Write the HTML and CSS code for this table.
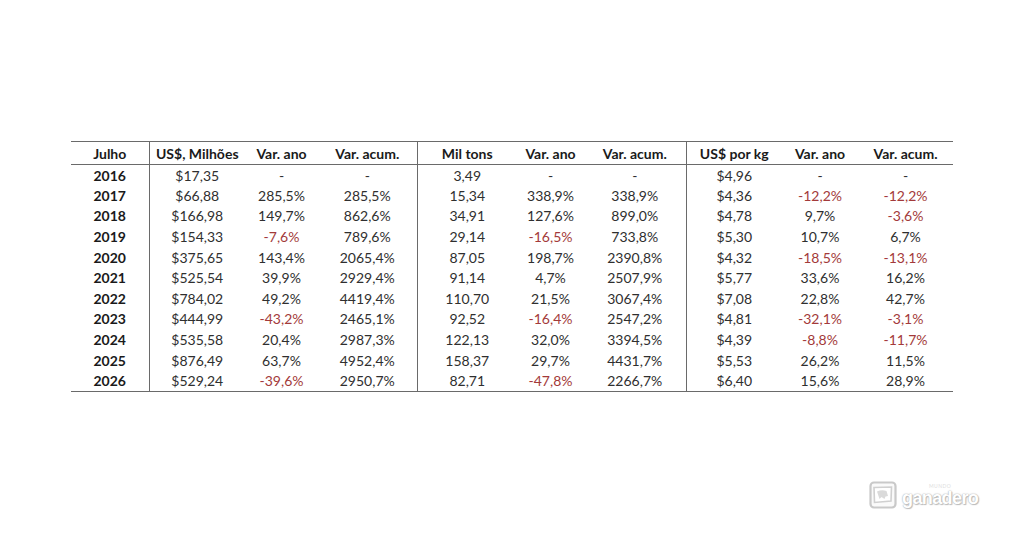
FILE: index.html
```html
<!DOCTYPE html>
<html lang="pt">
<head>
<meta charset="utf-8">
<title>Julho</title>
<link rel="stylesheet" href="styles.css">
</head>
<body>
<div class="page">
  <table class="data">
    <colgroup>
      <col class="c1"><col class="c2"><col class="c3"><col class="c4">
      <col class="c5"><col class="c6"><col class="c7">
      <col class="c8"><col class="c9"><col class="c10">
    </colgroup>
    <thead>
      <tr>
        <th class="sep">Julho</th>
        <th>US$, Milhões</th><th>Var. ano</th><th class="sep">Var. acum.</th>
        <th>Mil tons</th><th>Var. ano</th><th class="sep">Var. acum.</th>
        <th>US$ por kg</th><th>Var. ano</th><th>Var. acum.</th>
      </tr>
    </thead>
    <tbody>
      <tr><th class="sep">2016</th><td>$17,35</td><td>-</td><td class="sep">-</td><td>3,49</td><td>-</td><td class="sep">-</td><td>$4,96</td><td>-</td><td>-</td></tr>
      <tr><th class="sep">2017</th><td>$66,88</td><td>285,5%</td><td class="sep">285,5%</td><td>15,34</td><td>338,9%</td><td class="sep">338,9%</td><td>$4,36</td><td class="neg">-12,2%</td><td class="neg">-12,2%</td></tr>
      <tr><th class="sep">2018</th><td>$166,98</td><td>149,7%</td><td class="sep">862,6%</td><td>34,91</td><td>127,6%</td><td class="sep">899,0%</td><td>$4,78</td><td>9,7%</td><td class="neg">-3,6%</td></tr>
      <tr><th class="sep">2019</th><td>$154,33</td><td class="neg">-7,6%</td><td class="sep">789,6%</td><td>29,14</td><td class="neg">-16,5%</td><td class="sep">733,8%</td><td>$5,30</td><td>10,7%</td><td>6,7%</td></tr>
      <tr><th class="sep">2020</th><td>$375,65</td><td>143,4%</td><td class="sep">2065,4%</td><td>87,05</td><td>198,7%</td><td class="sep">2390,8%</td><td>$4,32</td><td class="neg">-18,5%</td><td class="neg">-13,1%</td></tr>
      <tr><th class="sep">2021</th><td>$525,54</td><td>39,9%</td><td class="sep">2929,4%</td><td>91,14</td><td>4,7%</td><td class="sep">2507,9%</td><td>$5,77</td><td>33,6%</td><td>16,2%</td></tr>
      <tr><th class="sep">2022</th><td>$784,02</td><td>49,2%</td><td class="sep">4419,4%</td><td>110,70</td><td>21,5%</td><td class="sep">3067,4%</td><td>$7,08</td><td>22,8%</td><td>42,7%</td></tr>
      <tr><th class="sep">2023</th><td>$444,99</td><td class="neg">-43,2%</td><td class="sep">2465,1%</td><td>92,52</td><td class="neg">-16,4%</td><td class="sep">2547,2%</td><td>$4,81</td><td class="neg">-32,1%</td><td class="neg">-3,1%</td></tr>
      <tr><th class="sep">2024</th><td>$535,58</td><td>20,4%</td><td class="sep">2987,3%</td><td>122,13</td><td>32,0%</td><td class="sep">3394,5%</td><td>$4,39</td><td class="neg">-8,8%</td><td class="neg">-11,7%</td></tr>
      <tr><th class="sep">2025</th><td>$876,49</td><td>63,7%</td><td class="sep">4952,4%</td><td>158,37</td><td>29,7%</td><td class="sep">4431,7%</td><td>$5,53</td><td>26,2%</td><td>11,5%</td></tr>
      <tr><th class="sep">2026</th><td>$529,24</td><td class="neg">-39,6%</td><td class="sep">2950,7%</td><td>82,71</td><td class="neg">-47,8%</td><td class="sep">2266,7%</td><td>$6,40</td><td>15,6%</td><td>28,9%</td></tr>
    </tbody>
  </table>
  <div class="watermark">
    <svg class="wm-icon" viewBox="0 0 28 28" width="28" height="28" aria-hidden="true">
      <rect x="1.5" y="1.5" width="25" height="25" rx="3.5" fill="#fafafa" stroke="#c9c9c9" stroke-width="2.2"/>
      <path d="M5 6.5 L22.5 6 L22 20 L5.5 21.5 Z" fill="#ffffff" stroke="#d0d0d0" stroke-width="1.6"/>
      <path d="M8 10.5 Q12.5 8.5 17.5 10 L19 15 L16.5 15.5 L15.5 18 L12.5 16 L10.5 18 L9.5 15 Z" fill="#dadada"/>
    </svg>
    <div class="wm-text">
      <span class="wm-small">MUNDO</span>
      <span class="wm-name">ganadero</span>
    </div>
  </div>
</div>
</body>
</html>
```

FILE: styles.css
```css
html, body {
  margin: 0;
  padding: 0;
  background: #ffffff;
}

.page {
  position: relative;
  width: 1024px;
  height: 535px;
  padding-top: 141px;
  padding-left: 71px;
  box-sizing: border-box;
  font-family: Lato, "Liberation Sans", Arial, sans-serif;
}

.data {
  border-collapse: collapse;
  table-layout: fixed;
  width: 882px;
  font-size: 14px;
  color: #2f2f2f;
}

.c1 { width: 78px; }
.c2 { width: 96px; }
.c3 { width: 73px; }
.c4 { width: 99px; }
.c5 { width: 100px; }
.c6 { width: 67px; }
.c7 { width: 102px; }
.c8 { width: 96px; }
.c9 { width: 76px; }
.c10 { width: 95px; }

.data thead tr {
  height: 23px;
  border-top: 1px solid #6a6a6a;
  border-bottom: 1px solid #6a6a6a;
}

.data thead th {
  font-weight: 700;
  color: #1a1a1a;
  padding: 0;
  text-align: center;
  white-space: nowrap;
}

.data tbody tr {
  height: 20.6px;
}

.data tbody tr:last-child {
  border-bottom: 1px solid #6a6a6a;
}

.data tbody th {
  font-weight: 700;
  color: #1a1a1a;
  padding: 0;
  text-align: center;
}

.data td {
  padding: 0;
  text-align: center;
  white-space: nowrap;
}

.data .sep {
  border-right: 1px solid #6a6a6a;
}

.data .neg {
  color: #a33a3a;
}

.watermark {
  position: absolute;
  left: 869px;
  top: 481px;
  display: flex;
  align-items: flex-end;
  gap: 5px;
}

.wm-icon {
  display: block;
}

.wm-text {
  display: flex;
  flex-direction: column;
  align-items: center;
  line-height: 1;
}

.wm-small {
  font-size: 5px;
  letter-spacing: 0.5px;
  color: #dedede;
  margin-bottom: 0;
}

.wm-name {
  font-family: "Liberation Sans", Arial, sans-serif;
  font-weight: 700;
  font-size: 18px;
  letter-spacing: -0.6px;
  color: #ffffff;
  margin-bottom: 2px;
  text-shadow: 0 0 1px #a8a8a8, 0 0 2px #c4c4c4, 1px 1px 1px #bdbdbd;
}
```
